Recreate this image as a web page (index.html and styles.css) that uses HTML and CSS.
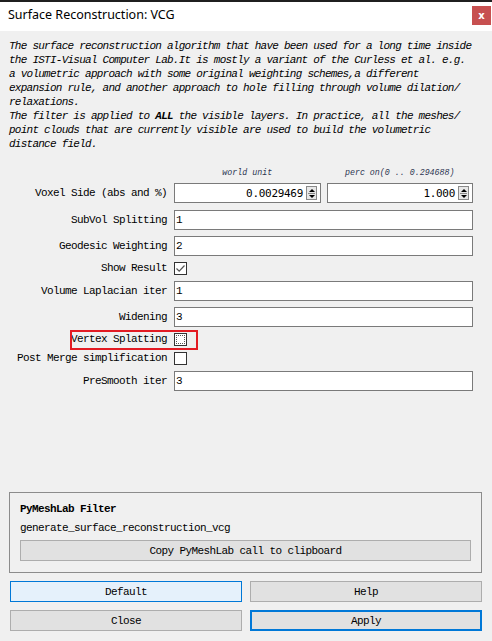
FILE: index.html
```html
<!DOCTYPE html>
<html>
<head>
<meta charset="utf-8">
<link rel="stylesheet" href="styles.css">
</head>
<body>
<div class="window">
  <div class="titlebar">
    <span class="title">Surface Reconstruction: VCG</span>
    <span class="close">x</span>
  </div>
  <div class="desc">The surface reconstruction algorithm that have been used for a long time inside<br>the ISTI-Visual Computer Lab.It is mostly a variant of the Curless et al. e.g.<br>a volumetric approach with some original weighting schemes,a different<br>expansion rule, and another approach to hole filling through volume dilation/<br>relaxations.<br>The filter is applied to <b>ALL</b> the visible layers. In practice, all the meshes/<br>point clouds that are currently visible are used to build the volumetric<br>distance field.</div>

  <div class="form">
    <div class="hdr-spacer"></div>
    <div class="hdr">
      <span>world unit</span>
      <span>perc on(0 .. 0.294688)</span>
    </div>

    <div class="lbl">Voxel Side (abs and %)</div>
    <div class="spins">
      <div class="spin"><span class="val">0.0029469</span><span class="arrows"><i class="up"></i><i class="down"></i></span></div>
      <div class="spin"><span class="val">1.000</span><span class="arrows"><i class="up"></i><i class="down"></i></span></div>
    </div>

    <div class="lbl">SubVol Splitting</div>
    <div class="input">1</div>

    <div class="lbl">Geodesic Weighting</div>
    <div class="input">2</div>

    <div class="lbl chk-row">Show Result</div>
    <div class="chk-row"><span class="cb"><svg width="11" height="11" viewBox="0 0 11 11"><path d="M1.5 5.5 L4.2 8.2 L9.5 2.5" fill="none" stroke="#555" stroke-width="1.2"/></svg></span></div>

    <div class="lbl">Volume Laplacian iter</div>
    <div class="input">1</div>

    <div class="lbl">Widening</div>
    <div class="input">3</div>

    <div class="lbl chk-row vs">Vertex Splatting<span class="mark"></span></div>
    <div class="chk-row"><span class="cb focus"><span class="dots"></span></span></div>

    <div class="lbl chk-row">Post Merge simplification</div>
    <div class="chk-row"><span class="cb"></span></div>

    <div class="lbl">PreSmooth iter</div>
    <div class="input">3</div>
  </div>

  <div class="bottom">
    <div class="pybox">
      <div class="pytitle">PyMeshLab Filter</div>
      <div class="pyname">generate_surface_reconstruction_vcg</div>
      <div class="btn">Copy PyMeshLab call to clipboard</div>
    </div>
    <div class="btns">
      <div class="btn big default">Default</div>
      <div class="btn big">Help</div>
      <div class="btn big">Close</div>
      <div class="btn big apply">Apply</div>
    </div>
  </div>
</div>
</body>
</html>
```
FILE: styles.css
```css
* { box-sizing: border-box; }
html, body { margin: 0; padding: 0; }
body {
  width: 492px;
  height: 641px;
  overflow: hidden;
  background: #f0f0f0;
  font-family: "Liberation Mono", "DejaVu Sans Mono", monospace;
  color: #000;
}
.window {
  display: flex;
  flex-direction: column;
  height: 641px;
}
.titlebar {
  height: 31px;
  border-top: 2px solid #1f1f1f;
  background: #fff;
  display: flex;
  align-items: center;
  justify-content: space-between;
  padding-left: 8px;
  padding-right: 1px;
}
.title {
  font-family: "Noto Sans", sans-serif;
  font-size: 12.5px;
  color: #000;
  margin-top: -4px;
}
.close {
  width: 19px;
  height: 19px;
  background: #c75050;
  color: #fff;
  font-family: "DejaVu Sans", sans-serif;
  font-weight: bold;
  font-size: 10px;
  display: flex;
  align-items: center;
  justify-content: center;
  margin-top: -3px;
}
.desc {
  margin-top: 8px;
  padding-left: 9px;
  font-style: italic;
  font-size: 11px;
  letter-spacing: -0.75px;
  line-height: 14px;
  white-space: nowrap;
}
.desc b { font-weight: bold; }

.form {
  margin-top: 15px;
  padding-left: 9px;
  padding-right: 19px;
  display: grid;
  grid-template-columns: 159px 1fr;
  column-gap: 6px;
  row-gap: 6px;
  align-items: center;
}
.hdr-spacer { height: 11px; }
.hdr {
  height: 11px;
  display: grid;
  grid-template-columns: 1fr 1fr;
  column-gap: 6px;
  font-style: italic;
  font-size: 8.3px;
  color: #2c3550;
  text-align: center;
  line-height: 13px;
}
.lbl {
  text-align: right;
  font-size: 11px;
  letter-spacing: -0.6px;
  white-space: nowrap;
  line-height: 13px;
  padding-right: 1px;
}
.spins {
  display: grid;
  grid-template-columns: 147px 1fr;
  column-gap: 6px;
  height: 21px;
  align-items: start;
}
.spin {
  height: 20px;
  background: #fff;
  border: 1px solid #7a7a7a;
  display: flex;
  align-items: center;
  justify-content: flex-end;
  padding-right: 3px;
}
.spin .val {
  font-family: "DejaVu Sans Mono", monospace;
  font-size: 11px;
  letter-spacing: -0.3px;
  margin-right: 3px;
}
.arrows {
  width: 11px;
  height: 14px;
  border: 1px solid #8a8a8a;
  background: #e8e8e8;
  display: flex;
  flex-direction: column;
  align-items: center;
  justify-content: space-around;
  position: relative;
}
.arrows::after {
  content: "";
  position: absolute;
  left: 1px; right: 1px; top: 5.5px;
  border-top: 1px solid #8a8a8a;
}
.arrows i {
  width: 0; height: 0;
  border-left: 3px solid transparent;
  border-right: 3px solid transparent;
}
.arrows .up { border-bottom: 3px solid #000; }
.arrows .down { border-top: 3px solid #000; }

.input {
  height: 20px;
  background: #fff;
  border: 1px solid #7a7a7a;
  font-size: 11px;
  letter-spacing: -0.6px;
  line-height: 18px;
  padding-left: 1px;
}
.chk-row { height: 13px; }
.cb {
  display: flex;
  align-items: center;
  justify-content: center;
  width: 13px;
  height: 13px;
  border: 1px solid #333;
  background: #fff;
}
.cb.focus { padding: 1px; }
.cb .dots {
  width: 100%;
  height: 100%;
  border: 1px dotted #555;
}
.vs { position: relative; }
.mark {
  position: absolute;
  left: 61px;
  top: -3px;
  width: 128px;
  height: 20px;
  border: 2px solid #e31b23;
}

.bottom {
  margin-top: auto;
  padding: 0 10px 10px 9px;
  display: flex;
  flex-direction: column;
  gap: 8px;
}
.pybox {
  height: 81px;
  border: 1px solid #8c8c8c;
  padding: 9px 10px 0 10px;
  display: flex;
  flex-direction: column;
}
.pytitle {
  font-weight: bold;
  font-size: 11px;
  letter-spacing: -0.6px;
  line-height: 14px;
}
.pyname {
  font-size: 11px;
  letter-spacing: -0.6px;
  line-height: 14px;
  margin-top: 5px;
  margin-bottom: 5px;
}
.btn {
  height: 21px;
  background: #e1e1e1;
  border: 1px solid #adadad;
  font-size: 11px;
  letter-spacing: -0.6px;
  display: flex;
  align-items: center;
  justify-content: center;
}
.btns {
  margin-left: 1px;
  display: grid;
  grid-template-columns: 232px 232px;
  column-gap: 8px;
  row-gap: 8px;
}
.btn.default {
  background: #e5f1fb;
  border: 1px solid #0078d7;
}
.btn.apply {
  border: 2px solid #0078d7;
}
```
